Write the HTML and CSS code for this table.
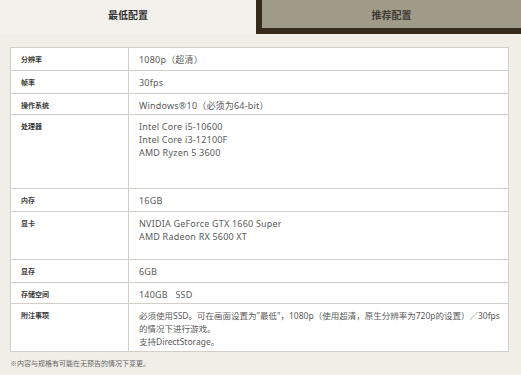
FILE: index.html
```html
<!DOCTYPE html>
<html lang="zh-CN">
<head>
<meta charset="utf-8">
<title>配置</title>
<link rel="stylesheet" href="styles.css">
</head>
<body>
<div class="page">
  <div class="tabs">
    <div class="tab tab-active">最低配置</div>
    <div class="tab tab-other">推荐配置</div>
  </div>
  <table class="spec">
    <tr class="h23"><th>分辨率</th><td>1080p（超清）</td></tr>
    <tr class="h23"><th>帧率</th><td>30fps</td></tr>
    <tr class="h21"><th>操作系统</th><td>Windows®10（必须为64-bit）</td></tr>
    <tr class="h74"><th>处理器</th><td>Intel Core i5-10600<br>Intel Core i3-12100F<br>AMD Ryzen 5 3600</td></tr>
    <tr class="h23"><th>内存</th><td>16GB</td></tr>
    <tr class="h48"><th>显卡</th><td>NVIDIA GeForce GTX 1660 Super<br>AMD Radeon RX 5600 XT</td></tr>
    <tr class="h23"><th>显存</th><td>6GB</td></tr>
    <tr class="h21"><th>存储空间</th><td>140GB&nbsp;&nbsp;&nbsp;SSD</td></tr>
    <tr class="h48"><th>附注事项</th><td class="note">必须使用SSD。可在画面设置为"最低"，1080p（使用超清，原生分辨率为720p的设置）／30fps<br>的情况下进行游戏。<br>支持DirectStorage。</td></tr>
  </table>
  <p class="foot">※内容与规格有可能在无预告的情况下变更。</p>
</div>
</body>
</html>
```
FILE: styles.css
```css
html, body {
  margin: 0;
  padding: 0;
}
body {
  background: #f1eee8;
  font-family: "Noto Sans", "Noto Sans CJK SC", sans-serif;
  width: 521px;
  height: 375px;
  overflow: hidden;
}
.page {
  display: flex;
  flex-direction: column;
}
.tabs {
  display: flex;
  height: 34px;
}
.tab {
  font-family: "Noto Sans CJK SC", sans-serif;
  font-size: 10px;
  font-weight: bold;
  text-align: center;
  box-sizing: border-box;
}
.tab-active {
  width: 256px;
  background: #f3f1ec;
  color: #333;
  line-height: 30px;
}
.tab-other {
  flex: 1;
  background: #a09a89;
  color: #3e3a33;
  border-left: 6px solid #352b1c;
  border-bottom: 6px solid #352b1c;
  line-height: 29px;
}
.spec {
  margin: 13px 0 0 10px;
  width: 499px;
  border-collapse: collapse;
  background: #fff;
  border: 1px solid #cdc9c2;
}
.spec th, .spec td {
  border: 1px solid #d3cfc8;
  vertical-align: top;
  text-align: left;
  padding: 0;
}
.spec th {
  width: 107px;
  padding: 6px 0 0 10px;
  font-family: "Noto Sans CJK SC", sans-serif;
  font-size: 7px;
  font-weight: bold;
  line-height: 10px;
  color: #3a3a3a;
}
.spec td {
  padding: 5px 0 0 10px;
  font-size: 9px;
  line-height: 13px;
  color: #5a5a5a;
  letter-spacing: 0.2px;
}
.spec td.note {
  font-size: 8.5px;
  letter-spacing: 0;
  white-space: nowrap;
}
.h21 { height: 21px; }
.h23 { height: 23px; }
.h48 { height: 48px; }
.h74 { height: 74px; }
.foot {
  margin: 6px 0 0 10px;
  font-family: "Noto Sans CJK SC", sans-serif;
  font-size: 7px;
  line-height: 10px;
  color: #666;
}
```
